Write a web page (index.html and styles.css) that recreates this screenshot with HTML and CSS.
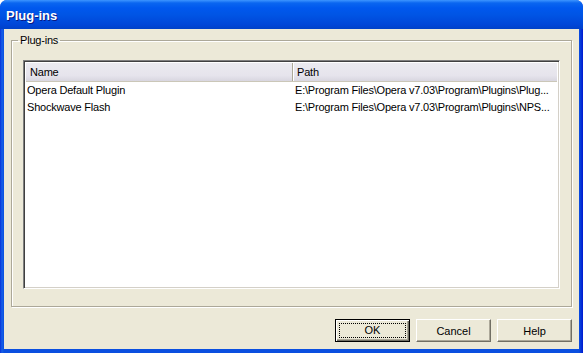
FILE: index.html
```html
<!DOCTYPE html>
<html>
<head>
    <meta charset="utf-8">
    <link rel="stylesheet" href="styles.css">
    <title>Plug-ins</title>
</head>
<body>

<div class="window">
    <div class="titlebar"><span class="title">Plug-ins</span></div>

    <div class="client">
        <fieldset class="group">
            <legend>Plug-ins</legend>

            <div class="list">
                <div class="list-header">
                    <div class="col col-name">Name</div>
                    <div class="col col-path">Path</div>
                </div>
                <div class="list-row">
                    <div class="cell col-name">Opera Default Plugin</div>
                    <div class="cell col-path">E:\Program Files\Opera v7.03\Program\Plugins\Plug...</div>
                </div>
                <div class="list-row">
                    <div class="cell col-name">Shockwave Flash</div>
                    <div class="cell col-path">E:\Program Files\Opera v7.03\Program\Plugins\NPS...</div>
                </div>
            </div>
        </fieldset>

        <div class="buttons">
            <button class="btn btn-default"><span class="focus">OK</span></button>
            <button class="btn">Cancel</button>
            <button class="btn">Help</button>
        </div>
    </div>
</div>

</body>
</html>
```

FILE: styles.css
```css
body {margin: 0; background: #fff;}
body {font-family: "Liberation Sans", Arial, sans-serif; font-size: 11px; letter-spacing: -0.2px;}

/* window frame */
.window {
    width: 583px; height: 353px; box-sizing: border-box;
    display: flex; flex-direction: column;
    background: linear-gradient(to right, #0831d9 0, #1660e8 2px, #0a4fe0 4px, #0a4fe0 calc(100% - 4px), #0019cf 100%);
    border-radius: 7px 7px 0 0;
    padding: 0 4px 4px 4px;
}

.titlebar {
    height: 29px; margin: 0 -4px;
    display: flex; align-items: center;
    padding-left: 6px;
    border-radius: 7px 7px 0 0;
    background: linear-gradient(to bottom, #3d95ff 0, #0a66f0 3px, #0058ee 8px, #0055e5 50%, #0046d8 85%, #0041c8 100%);
}
.title {
    color: #fff; font-weight: bold; font-size: 13px; letter-spacing: 0;
    text-shadow: 1px 1px 0 #0a1883;
    margin-top: 1px;
}

.client {
    flex: 1;
    display: flex; flex-direction: column;
    background: #ece9d8;
    padding: 0 7px 7px 7px;
}

/* group box */
.group {
    flex: 1; min-height: 0;
    margin: 5px 0 0 0;
    padding: 13px 11px 17px 11px;
    border: 1px solid #aca899;
    box-shadow: 1px 1px 0 #fff, inset 1px 1px 0 #fff;
    display: flex; flex-direction: column;
}
.group legend {
    padding: 0 2px; margin-left: -5px;
    line-height: 13px; color: #000;
}

/* list view */
.list {
    flex: 1;
    background: #fff;
    border-top: 1px solid #7f7f7f; border-left: 1px solid #7f7f7f;
    border-right: 1px solid #fff; border-bottom: 1px solid #fff;
    box-shadow: inset 1px 1px 0 #404040, inset -1px -1px 0 #d4d0c8;
    padding: 2px;
}
.list-header {
    display: flex; height: 18px;
    background: linear-gradient(to bottom, #ebeaf0 0, #e6e4ec 70%, #d8d6e0 100%);
    border-bottom: 1px solid #cbc7b8;
}
.col {
    line-height: 18px; padding-left: 4px; box-sizing: border-box;
    color: #000;
}
.list-header .col-name {border-right: 1px solid #aca899; box-shadow: 1px 0 0 #fff;}
.col-name {width: 267px;}
.col-path {flex: 1;}

.list-row {display: flex; height: 17px; line-height: 17px;}
.cell {padding-left: 1px; box-sizing: border-box; white-space: nowrap; overflow: hidden;}
.list-row .col-path {padding-left: 2px;}

/* buttons */
.buttons {
    display: flex; justify-content: flex-end; gap: 6px;
    margin-top: 12px;
}
.btn {
    width: 75px; height: 23px; box-sizing: border-box;
    font-family: inherit; font-size: 11px; color: #000; letter-spacing: 0;
    background: #ece9d8;
    border: 1px solid; border-color: #fff #716f64 #716f64 #fff;
    box-shadow: inset -1px -1px 0 #aca899;
    padding: 0;
}
.btn-default {
    border: 1px solid #000;
    box-shadow: inset 1px 1px 0 #fff, inset -1px -1px 0 #716f64, inset -2px -2px 0 #aca899;
    padding: 3px;
}
.btn-default .focus {
    display: block; height: 100%; box-sizing: border-box;
    border: 1px dotted #000; line-height: 13px;
}
```
